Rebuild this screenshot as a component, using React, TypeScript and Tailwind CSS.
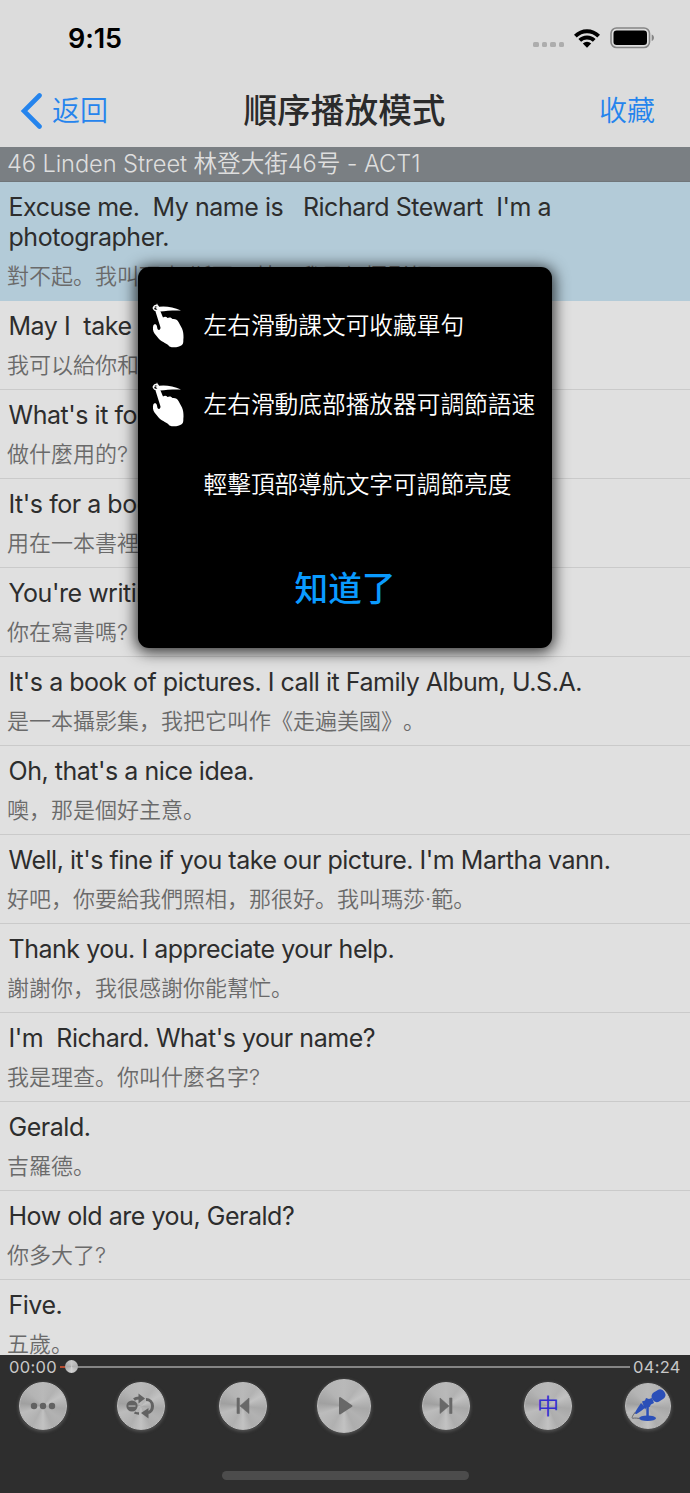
import React from 'react';

const latin = "font-['Inter','Noto_Sans_CJK_SC',sans-serif]";

const lines = [
  {
    en: "Excuse me.  My name is   Richard Stewart  I'm a photographer.",
    zh: '對不起。我叫理查·斯圖爾特，我是個攝影師。',
    active: true,
  },
  { en: 'May I  take your picture?', zh: '我可以給你和你的孩子照相嗎？' },
  { en: "What's it for?", zh: '做什麼用的?' },
  { en: "It's for a book.", zh: '用在一本書裡。' },
  { en: "You're writing a book?", zh: '你在寫書嗎?' },
  { en: "It's a book of pictures. I call it Family Album, U.S.A.", zh: '是一本攝影集，我把它叫作《走遍美國》。' },
  { en: "Oh, that's a nice idea.", zh: '噢，那是個好主意。' },
  { en: "Well, it's fine if you take our picture. I'm Martha vann.", zh: '好吧，你要給我們照相，那很好。我叫瑪莎·範。' },
  { en: 'Thank you. I appreciate your help.', zh: '謝謝你，我很感謝你能幫忙。' },
  { en: "I'm  Richard. What's your name?", zh: '我是理查。你叫什麼名字?' },
  { en: 'Gerald.', zh: '吉羅德。' },
  { en: 'How old are you, Gerald?', zh: '你多大了?' },
  { en: 'Five.', zh: '五歲。' },
];

const StatusBar = () => (
  <div className="flex h-[74px] items-center justify-between pt-[1px] pl-[68px] pr-[35px] text-black">
    <span className="pt-0.5 text-[27px] leading-8 font-semibold tracking-[-0.1px]">9:15</span>
    <div className="flex items-center">
      <div className="mt-3.5 mr-[9px] flex gap-[3px]">
        {[0, 1, 2, 3].map((i) => (
          <span key={i} className="h-[5.5px] w-[5.5px] rounded-[1.5px] bg-[#adadad]" />
        ))}
      </div>
      <svg className="mr-[9px]" width="28" height="20" viewBox="0 0 28 20">
        <path d="M1 6.7a18.500 18.500 0 0 1 26 0l-2.700 2.800a14.600 14.600 0 0 0-20.600 0z" />
        <path d="M5.400 11.100a12.200 12.200 0 0 1 17.200 0l-2.700 2.700a8.400 8.400 0 0 0-11.800 0z" />
        <path d="M9.800 15.500a6 6 0 0 1 8.400 0L14 19.700z" />
      </svg>
      <svg width="45" height="22" viewBox="0 0 45 22">
        <rect x="1" y="1" width="38.5" height="19.5" rx="5.5" fill="none" stroke="#858585" strokeWidth="1.6" />
        <rect x="3.5" y="3.5" width="33.5" height="14.5" rx="3.2" />
        <path d="M41.7 7.5c3 1.2 3 5.3 0 6.5z" fill="#858585" />
      </svg>
    </div>
  </div>
);

const NavBar = () => (
  <div className="flex h-[73px] items-center justify-between pr-[35px] pl-5 text-[28px] font-[350] text-[#2584ed]">
    <div className="flex w-[120px] items-center">
      <svg width="23" height="36" viewBox="0 0 23 36" className="mr-[9px]">
        <path d="M19.5 2.5 4 18l15.5 15.5" fill="none" stroke="#2584ed" strokeWidth="4.6" strokeLinecap="round" />
      </svg>
      <span>返回</span>
    </div>
    <h1 className="mt-0.5 pl-3.5 text-[33.7px] font-medium text-[#2b2b2b]">順序播放模式</h1>
    <span className="w-[120px] text-right">收藏</span>
  </div>
);

const Hand = () => (
  <svg width="34" height="46" viewBox="0 0 34 46" fill="#fff">
    <path d="M4 4.5C12 2.500 21 3.500 30 7.500 21 7.200 15 8 9 8.500z" />
    <circle cx="5" cy="5" r="2.500" fill="none" stroke="#fff" strokeWidth="1.300" />
    <path d="M6 .8v3M1.500 5 4 4" stroke="#fff" />
    <path d="M4.500 8.500C6 6 8.500 6.500 9.500 8.500L12 14.500c1.500-1 3.500-.8 4.500.5 2-1 4-.5 5 1 2.500-.5 5 .8 6 3l3.500 6.500c1.300 3 1.500 6 1.500 9-.5 3 .5 5.500-1.500 7.500-3.500 2.500-9 3-12.500 1.500-2-3-7-4-10.500-7.500L3.500 30.500C2 28.500 1.500 25 2.300 22.500c.9-2 3.200-1.500 3.500.3l.7 3.200c1.500 2.200 3 .5 3-1.500z" />
  </svg>
);

const Tips = () => (
  <div className="absolute top-[267px] left-[138px] flex h-[381px] w-[414px] flex-col rounded-[11px] bg-black text-[23.7px] font-[350] text-white shadow-[0_2px_15px_2px_rgba(0,0,0,0.8)]">
    <div className="mt-[19px] flex h-[79px] items-center pl-[13px]">
      <Hand />
      <span className="ml-[18.5px] whitespace-nowrap">左右滑動課文可收藏單句</span>
    </div>
    <div className="flex h-[79px] items-center pl-[13px]">
      <Hand />
      <span className="ml-[18.5px] whitespace-nowrap">左右滑動底部播放器可調節語速</span>
    </div>
    <div className="flex h-[81px] items-center pl-[65.5px]">輕擊頂部導航文字可調節亮度</div>
    <button className="mt-[35px] self-center text-[33.7px] leading-[58px] font-medium text-[#0a9bff]">知道了</button>
  </div>
);

const Knob = ({ size, children }: { size: string; children: React.ReactNode }) => (
  <button
    className={`${size} flex items-center justify-center rounded-full border border-[#bdbdbd] bg-[conic-gradient(from_0deg,#b9b9b9,#b2b2b2_10%,#c2c2c2_17%,#a8a8a8_27%,#b2b2b2_35%,#adadad_43%,#c2c2c2_50%,#b0b0b0_58%,#bcbcbc_70%,#a0a0a0_77%,#b4b4b4_88%,#b9b9b9)] shadow-[0_1px_3px_1px_#505050]`}
  >
    {children}
  </button>
);

const Player = () => (
  <div className="h-[138px] shrink-0 bg-[#2e2e2e]">
    <div className="flex h-6 items-center pr-[10px] pl-[9px] text-[16.5px] tracking-[0.3px] text-[#c8c8c8]">
      <span className="w-[51px]">00:00</span>
      <div className="relative mr-[3px] h-[1.5px] flex-1 bg-[#858585]">
        <div className="h-full w-2 bg-[#b64b2f]" />
        <div className="absolute -top-[6px] left-[5px] h-[13px] w-[13px] rounded-full bg-[conic-gradient(#c8c8c8,#b0b0b0,#d2d2d2,#a8a8a8,#c8c8c8)]" />
      </div>
      <span className="w-[47px]">04:24</span>
    </div>
    <div className="flex h-[54px] items-center pl-[19px]">
      <Knob size="w-12 h-12">
        <svg width="26" height="8" fill="#626262">
          <circle cx="4" cy="4" r="3.2" />
          <circle cx="13" cy="4" r="3.2" />
          <circle cx="22" cy="4" r="3.2" />
        </svg>
      </Knob>
      <Knob size="ml-[50px] w-12 h-12">
        <svg width="30" height="26" viewBox="0 0 30 26" fill="#626262">
          <circle cx="6" cy="13" r="5.6" />
          <path d="M2.5 12.3h7v1.5h-7z" fill="#a8a8a8" />
          <path d="M8 6.500Q10 5 13 5" fill="none" stroke="#626262" strokeWidth="3" />
          <path d="M12.500.5v10l6.500-5z" />
          <path d="M20 6.500c3.500 0 6.500 2.500 6.500 6.500s-2 6-4.500 6.700" fill="none" stroke="#626262" strokeWidth="3" />
          <path d="M22.500 15v10.500L15 20z" />
          <path d="M8.500 19.500q2 1 4.500 1" fill="none" stroke="#626262" strokeWidth="2.500" />
        </svg>
      </Knob>
      <Knob size="ml-[54px] w-12 h-12">
        <svg width="14" height="18" viewBox="0 0 14 18" fill="#686868">
          <path d="M1 1h2.400v15.500H1zM13 1v15.500L4 9z" stroke="#686868" strokeWidth=".6" strokeLinejoin="round" />
        </svg>
      </Knob>
      <Knob size="ml-[50px] w-[54px] h-[54px]">
        <svg width="16" height="20" viewBox="0 0 16 20" className="ml-1">
          <path d="M2 2v15.500L13.500 10z" fill="#686868" stroke="#686868" strokeWidth="2" strokeLinejoin="round" />
        </svg>
      </Knob>
      <Knob size="ml-[51px] w-12 h-12">
        <svg width="14" height="18" viewBox="0 0 14 18" fill="#686868">
          <path d="M10.600 1H13v15.500h-2.400zM1 1v15.500L10 9z" stroke="#686868" strokeWidth=".6" strokeLinejoin="round" />
        </svg>
      </Knob>
      <Knob size="ml-[54px] w-12 h-12">
        <span className="text-[22px] leading-none text-[#332fd0]">中</span>
      </Knob>
      <Knob size="ml-[53px] w-[46px] h-[46px]">
        <svg width="40" height="38" viewBox="0 0 40 38" className="shrink-0" fill="#2b4fb8">
          <rect x="23.500" y="3.500" width="14" height="10.500" rx="4.500" transform="rotate(-32 30.500 8.700)" />
          <path d="m14 14.500 3-1 1-2.500 3 1 3-1 2 5-3 1.500-1.500 2.500-3 .5-1.500 2z" />
          <path d="m13 16 4.500 4.500L13 24l-4.500 3-2-.5L9 22z" />
          <path d="M18.300 17h2.500v13h-2.500z" />
          <ellipse cx="19.500" cy="31.200" rx="8.500" ry="2.800" />
          <path d="M7.500 25C5 28 3.500 30.500 4.500 31.300c3-.6 5 0 7 .2" fill="none" stroke="#66666c" strokeWidth="1" />
        </svg>
      </Knob>
    </div>
    <div className="mx-auto mt-[37.5px] h-[9px] w-[247px] rounded-full bg-[#4c4c4c]" />
  </div>
);

export default function App() {
  return (
    <div className={`${latin} relative flex h-[1493px] w-[690px] flex-col overflow-hidden bg-[#dcdcdc]`}>
      <StatusBar />
      <NavBar />
      <div className="h-[34.5px] shrink-0 border-b border-[#70767a] bg-[#7a7f83] pl-[7px] text-[23.7px] leading-[34px] font-[350] tracking-[-0.12px] whitespace-nowrap text-[#dedede]">
        46 Linden Street 林登大街46号 - ACT1
      </div>
      <div className="min-h-0 flex-1 overflow-hidden bg-[#e0e0e0]">
        {lines.map((line) => (
          <div
            key={line.en}
            className={`border-b pt-[10px] ${line.active ? 'h-[119px] border-[#b3cbd8] bg-[#b3cbd8]' : 'h-[89px] border-[#cacaca]'}`}
          >
            <p className="w-[640px] pl-[8.5px] text-[25px] leading-[30px] tracking-[-0.47px] whitespace-pre-wrap text-[#2d2d2d]">{line.en}</p>
            <p className="mt-[9px] pl-[7px] text-[22px] leading-[30px] font-[350] whitespace-nowrap text-[#6a6a6a] [text-spacing-trim:space-all]">{line.zh}</p>
          </div>
        ))}
      </div>
      <Player />
      <Tips />
    </div>
  );
}
